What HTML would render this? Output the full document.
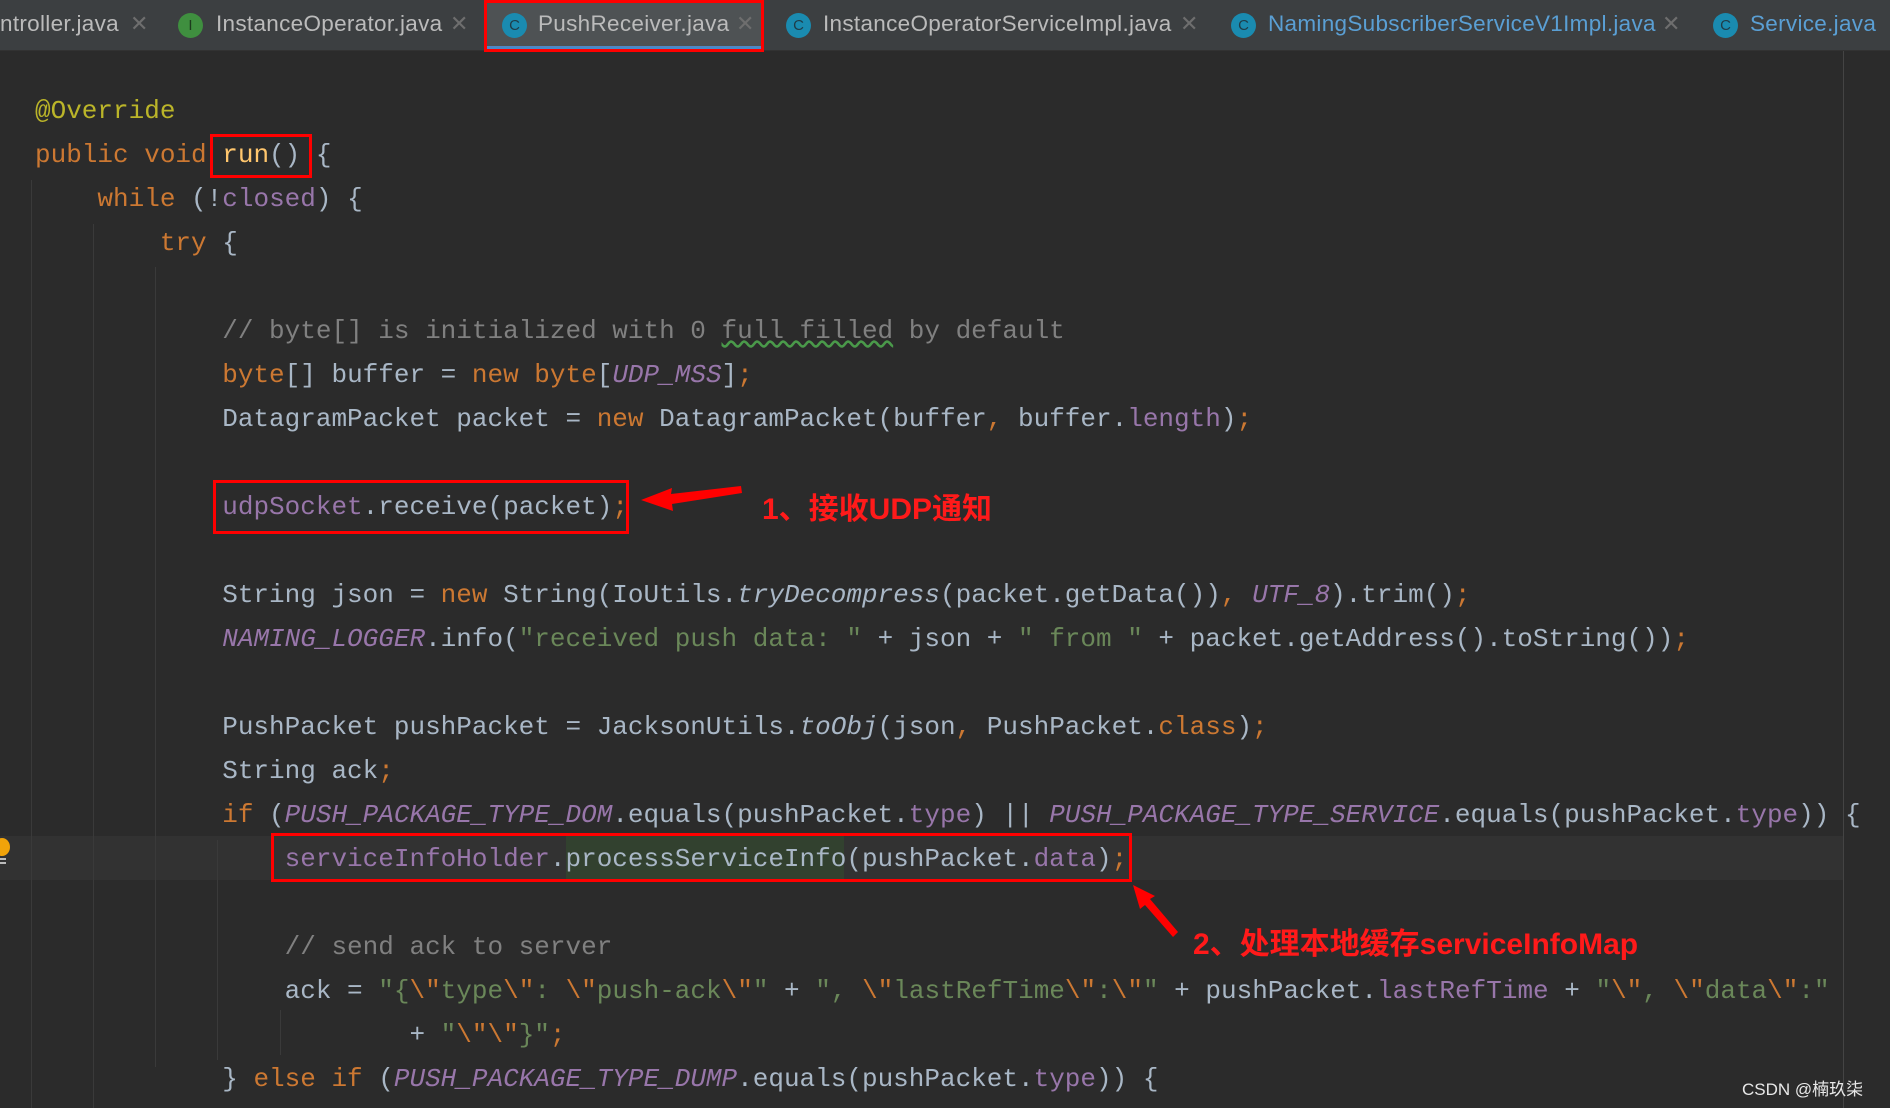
<!DOCTYPE html>
<html><head><meta charset="utf-8">
<style>
html,body{margin:0;padding:0}
body{width:1890px;height:1108px;background:#2b2b2b;position:relative;overflow:hidden;font-family:"Liberation Mono",monospace}
.tabs{position:absolute;left:0;top:0;width:1890px;height:50px;background:#3c3f41;border-bottom:1px solid #323232}
.tab{position:absolute;top:0;height:50px;line-height:48px;font-family:"Liberation Sans",sans-serif;font-size:22.5px;letter-spacing:0.3px;color:#bbbbbb;white-space:nowrap}
.ic{position:absolute;top:13px;width:25px;height:25px;border-radius:50%;background:#1a8bb0;color:#1f3c48;font-size:15px;line-height:25px;text-align:center;font-family:"Liberation Sans",sans-serif}
.x{position:absolute;top:0;color:#6e6e6e;font-size:22px;font-family:"Liberation Sans",sans-serif}
.l{position:absolute;white-space:pre;font-size:26px;line-height:44px;color:#a9b7c6}
.k{color:#cc7832}.p{color:#9876aa}.s{color:#6a8759}.c{color:#808080}.a{color:#bbb529}.m{color:#ffc66d}.i{font-style:italic}
.box{position:absolute;border:3px solid #ff0000;box-sizing:border-box}
.g{position:absolute;width:1px;background:#3a3a3a}
.ann{position:absolute;color:#ff1a1a;font-family:"Liberation Sans","Noto Sans CJK SC",sans-serif;font-weight:bold;font-size:30px;white-space:nowrap}
</style></head><body>
<div class="tabs">
  <div class="tab" style="left:0">ntroller.java</div><div class="x" style="left:130px;line-height:48px">✕</div>
  <div class="ic" style="left:178px;background:#3f8f3f;color:#1d3a1d">I</div>
  <div class="tab" style="left:216px">InstanceOperator.java</div><div class="x" style="left:450px;line-height:48px">✕</div>
  <div style="position:absolute;left:484px;top:0;width:280px;height:50px;background:#4e5254"></div>
  <div style="position:absolute;left:484px;top:46px;width:280px;height:4px;background:#4a88c7"></div>
  <div class="ic" style="left:502px">C</div>
  <div class="tab" style="left:538px">PushReceiver.java</div><div class="x" style="left:736px;line-height:48px">✕</div>
  <div class="ic" style="left:786px">C</div>
  <div class="tab" style="left:823px">InstanceOperatorServiceImpl.java</div><div class="x" style="left:1180px;line-height:48px">✕</div>
  <div class="ic" style="left:1231px">C</div>
  <div class="tab" style="left:1268px;color:#5a9fd4">NamingSubscriberServiceV1Impl.java</div><div class="x" style="left:1662px;line-height:48px">✕</div>
  <div class="ic" style="left:1713px">C</div>
  <div class="tab" style="left:1750px;color:#5a9fd4">Service.java</div>
</div>
<div class="box" style="left:484px;top:0;width:280px;height:52px"></div>

<div style="position:absolute;left:1843px;top:51px;width:1px;height:1057px;background:#444"></div>
<div style="position:absolute;left:0;top:836px;width:1843px;height:44px;background:#323232"></div>
<div style="position:absolute;left:566px;top:836px;width:278px;height:44px;background:#32412f"></div>
<div style="position:absolute;left:-6px;top:838px;width:16px;height:18px;border-radius:50%;background:#f0a30a"></div>
<div style="position:absolute;left:0;top:858px;width:6px;height:2px;background:#bbb"></div>
<div style="position:absolute;left:0;top:862px;width:6px;height:2px;background:#bbb"></div>

<div class="g" style="left:31px;top:180px;height:928px"></div>
<div class="g" style="left:93px;top:224px;height:884px"></div>
<div class="g" style="left:155px;top:267px;height:800px"></div>
<div class="g" style="left:217px;top:840px;height:220px"></div>
<div class="g" style="left:280px;top:1010px;height:45px"></div>

<div class="l" style="left:35px;top:89px"><span class="a">@Override</span></div>
<div class="l" style="left:35px;top:133px"><span class="k">public void </span><span class="m">run</span>() {</div>
<div class="l" style="left:35px;top:177px">    <span class="k">while </span>(!<span class="p">closed</span>) {</div>
<div class="l" style="left:35px;top:221px">        <span class="k">try </span>{</div>
<div class="l" style="left:35px;top:309px">            <span class="c">// byte[] is initialized with 0 <span style="text-decoration:underline wavy #4a9a4a">full filled</span> by default</span></div>
<div class="l" style="left:35px;top:353px">            <span class="k">byte</span>[] buffer = <span class="k">new byte</span>[<span class="p i">UDP_MSS</span>]<span class="k">;</span></div>
<div class="l" style="left:35px;top:397px">            DatagramPacket packet = <span class="k">new </span>DatagramPacket(buffer<span class="k">, </span>buffer.<span class="p">length</span>)<span class="k">;</span></div>
<div class="l" style="left:35px;top:485px">            <span class="p">udpSocket</span>.receive(packet)<span class="k">;</span></div>
<div class="l" style="left:35px;top:573px">            String json = <span class="k">new </span>String(IoUtils.<span class="i">tryDecompress</span>(packet.getData())<span class="k">, </span><span class="p i">UTF_8</span>).trim()<span class="k">;</span></div>
<div class="l" style="left:35px;top:617px">            <span class="p i">NAMING_LOGGER</span>.info(<span class="s">"received push data: "</span> + json + <span class="s">" from "</span> + packet.getAddress().toString())<span class="k">;</span></div>
<div class="l" style="left:35px;top:705px">            PushPacket pushPacket = JacksonUtils.<span class="i">toObj</span>(json<span class="k">, </span>PushPacket.<span class="k">class</span>)<span class="k">;</span></div>
<div class="l" style="left:35px;top:749px">            String ack<span class="k">;</span></div>
<div class="l" style="left:35px;top:793px">            <span class="k">if </span>(<span class="p i">PUSH_PACKAGE_TYPE_DOM</span>.equals(pushPacket.<span class="p">type</span>) || <span class="p i">PUSH_PACKAGE_TYPE_SERVICE</span>.equals(pushPacket.<span class="p">type</span>)) {</div>
<div class="l" style="left:35px;top:837px">                <span class="p">serviceInfoHolder</span>.processServiceInfo(pushPacket.<span class="p">data</span>)<span class="k">;</span></div>
<div class="l" style="left:35px;top:925px">                <span class="c">// send ack to server</span></div>
<div class="l" style="left:35px;top:969px">                ack = <span class="s">"{</span><span class="k">\"</span><span class="s">type</span><span class="k">\"</span><span class="s">: </span><span class="k">\"</span><span class="s">push-ack</span><span class="k">\"</span><span class="s">"</span> + <span class="s">", </span><span class="k">\"</span><span class="s">lastRefTime</span><span class="k">\"</span><span class="s">:</span><span class="k">\"</span><span class="s">"</span> + pushPacket.<span class="p">lastRefTime</span> + <span class="s">"</span><span class="k">\"</span><span class="s">, </span><span class="k">\"</span><span class="s">data</span><span class="k">\"</span><span class="s">:"</span></div>
<div class="l" style="left:35px;top:1013px">                        + <span class="s">"</span><span class="k">\"\"</span><span class="s">}"</span><span class="k">;</span></div>
<div class="l" style="left:35px;top:1057px">            } <span class="k">else if </span>(<span class="p i">PUSH_PACKAGE_TYPE_DUMP</span>.equals(pushPacket.<span class="p">type</span>)) {</div>

<div class="box" style="left:210px;top:134px;width:102px;height:44px"></div>
<div class="box" style="left:213px;top:480px;width:416px;height:54px"></div>
<div class="box" style="left:271px;top:833px;width:861px;height:49px"></div>

<svg style="position:absolute;left:0;top:0" width="1890" height="1108">
  <polygon points="741,486 671,494 672,488 641,500 673,511 672,504 742,493" fill="#ff0000"/>
  <polygon points="1178,932 1150,899 1155,896 1133,885 1140,909 1145,905 1173,937" fill="#ff0000"/>
</svg>
<div class="ann" style="left:762px;top:484px">1、接收UDP通知</div>
<div class="ann" style="left:1193px;top:919px">2、处理本地缓存serviceInfoMap</div>

<div style="position:absolute;left:1742px;top:1075px;color:#e8e8e8;font-family:'Liberation Sans','Noto Sans CJK SC',sans-serif;font-size:17px">CSDN @楠玖柒</div>
</body></html>
